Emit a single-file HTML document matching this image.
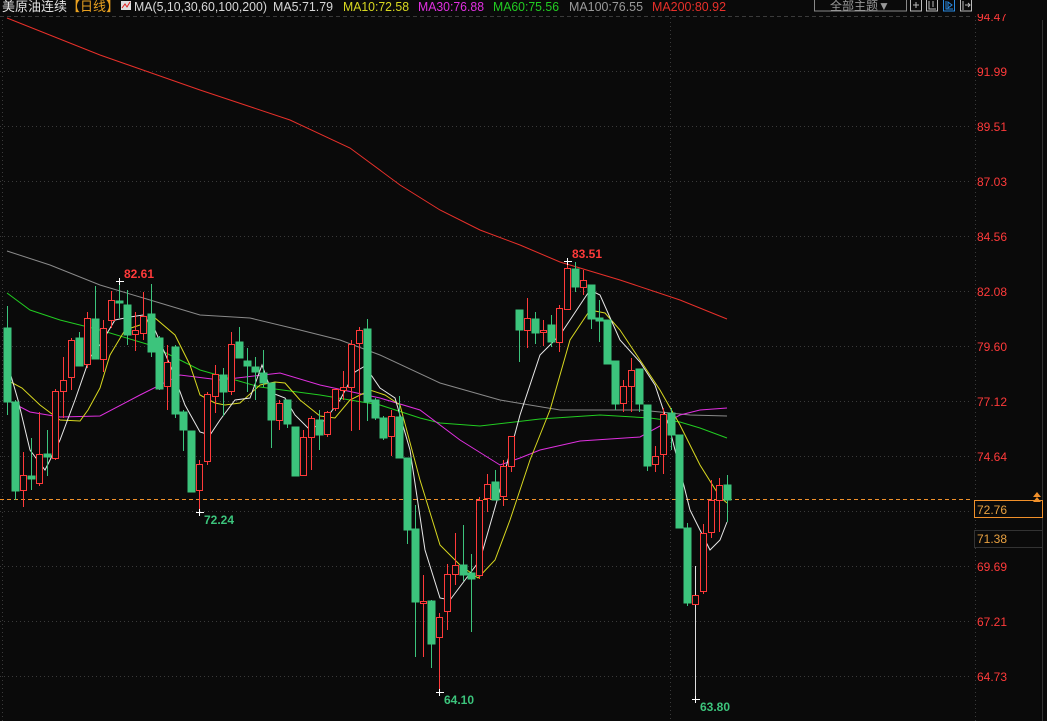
<!DOCTYPE html>
<html><head><meta charset="utf-8"><style>
html,body{margin:0;padding:0;background:#0a0a0a;width:1047px;height:721px;overflow:hidden}
svg{display:block}
text{font-family:"Liberation Sans","Noto Sans CJK SC",sans-serif}
</style></head><body>
<svg width="1047" height="721" viewBox="0 0 1047 721" xmlns="http://www.w3.org/2000/svg">
<rect width="1047" height="721" fill="#0a0a0a"/>
<g stroke="#3a3a3a" stroke-dasharray="1,3" stroke-width="1">
<line x1="0" y1="16.5" x2="972" y2="16.5" stroke-dasharray="4,3"/>
<line x1="0" y1="71.5" x2="972" y2="71.5"/><line x1="0" y1="126.5" x2="972" y2="126.5"/>
<line x1="0" y1="181.5" x2="972" y2="181.5"/><line x1="0" y1="236.5" x2="972" y2="236.5"/>
<line x1="0" y1="291.5" x2="972" y2="291.5"/><line x1="0" y1="346.5" x2="972" y2="346.5"/>
<line x1="0" y1="401.5" x2="972" y2="401.5"/><line x1="0" y1="456.5" x2="972" y2="456.5"/>
<line x1="0" y1="511.5" x2="972" y2="511.5"/><line x1="0" y1="566.5" x2="972" y2="566.5"/>
<line x1="0" y1="621.5" x2="972" y2="621.5"/><line x1="0" y1="676.5" x2="972" y2="676.5"/>
<line x1="2.5" y1="16" x2="2.5" y2="721"/><line x1="975.5" y1="16" x2="975.5" y2="721"/>
<line x1="670.5" y1="18" x2="670.5" y2="721"/>
</g>
<line x1="1042.5" y1="20" x2="1042.5" y2="721" stroke="#333"/>
<line x1="0" y1="499.5" x2="972" y2="499.5" stroke="#f0902a" stroke-dasharray="4,3"/>
<g fill="none" stroke-width="1">
<polyline stroke="#e8302a" points="7,18 100,55 200,90 290,120 350,148 400,185 440,210 480,230 520,245 560,262 620,280 680,300 727,319"/>
<polyline stroke="#8a8a8a" points="7,251 50,265 100,285 150,300 200,315 250,318 300,330 340,340 380,355 440,383 500,400 560,410 640,410 690,415 727,416"/>
<polyline stroke="#22cc22" points="7,293 30,310 60,320 100,330 150,345 200,370 260,387 320,395 380,405 420,418 440,423 480,426 540,419 600,415 650,418 680,422 700,428 727,438"/>
<polyline stroke="#e030e0" points="7,400 30,412 60,417 100,416 140,395 180,375 220,380 280,373 320,385 380,398 420,410 460,440 500,465 520,458 540,450 580,441 640,437 680,415 700,410 727,408"/>
<polyline stroke="#d8d820" points="7,380 22,388 40,405 60,420 80,421 88,410 100,388 110,355 125,330 140,325 155,318 175,335 190,365 200,395 215,403 225,405 240,403 260,385 275,382 285,383 300,400 320,416 335,418 350,400 370,390 385,395 400,405 420,480 440,545 460,565 478,578 495,560 510,520 530,460 550,410 570,340 590,310 605,313 620,330 640,360 660,390 680,425 700,465 720,497 727,503"/>
<polyline stroke="#e8e8e8" points="7,362 18,400 30,450 45,470 60,440 75,400 90,357 100,345 115,320 130,317 143,315 155,330 170,365 185,405 200,432 210,435 220,420 235,400 250,398 262,365 272,393 285,398 295,415 310,430 325,420 340,400 355,372 365,366 380,388 395,398 410,450 425,550 440,598 450,600 465,580 480,560 500,490 520,415 540,355 560,335 580,305 590,290 600,295 620,340 640,362 655,385 670,430 690,510 710,550 720,540 727,522"/>
</g>
<g stroke="#3cc47c" fill="#3cc47c">
<line x1="7.5" y1="306" x2="7.5" y2="415"/><rect x="4" y="328" width="7" height="74"/>
<line x1="15.5" y1="400" x2="15.5" y2="500"/><rect x="12" y="402" width="7" height="89"/>
<line x1="31.5" y1="438" x2="31.5" y2="490"/><rect x="28" y="476" width="7" height="3"/>
<line x1="47.5" y1="430" x2="47.5" y2="476"/><rect x="44" y="454" width="7" height="3"/>
<line x1="79.5" y1="332" x2="79.5" y2="366"/><rect x="76" y="338" width="7" height="28"/>
<line x1="95.5" y1="286" x2="95.5" y2="359"/><rect x="92" y="319" width="7" height="40"/>
<line x1="119.5" y1="281" x2="119.5" y2="318"/><rect x="116" y="301" width="7" height="2"/>
<line x1="127.5" y1="290" x2="127.5" y2="345"/><rect x="124" y="305" width="7" height="30"/>
<line x1="151.5" y1="284" x2="151.5" y2="357"/><rect x="148" y="314" width="7" height="38"/>
<line x1="159.5" y1="336" x2="159.5" y2="390"/><rect x="156" y="338" width="7" height="51"/>
<line x1="175.5" y1="345" x2="175.5" y2="418"/><rect x="172" y="347" width="7" height="67"/>
<line x1="183.5" y1="410" x2="183.5" y2="451"/><rect x="180" y="412" width="7" height="18"/>
<line x1="191.5" y1="431" x2="191.5" y2="492"/><rect x="188" y="431" width="7" height="61"/>
<line x1="223.5" y1="368" x2="223.5" y2="416"/><rect x="220" y="375" width="7" height="17"/>
<line x1="239.5" y1="327" x2="239.5" y2="358"/><rect x="236" y="342" width="7" height="16"/>
<line x1="247.5" y1="348" x2="247.5" y2="392"/><rect x="244" y="361" width="7" height="5"/>
<line x1="255.5" y1="357" x2="255.5" y2="400"/><rect x="252" y="367" width="7" height="5"/>
<line x1="263.5" y1="350" x2="263.5" y2="387"/><rect x="260" y="373" width="7" height="10"/>
<line x1="271.5" y1="383" x2="271.5" y2="448"/><rect x="268" y="383" width="7" height="37"/>
<line x1="287.5" y1="400" x2="287.5" y2="428"/><rect x="284" y="400" width="7" height="24"/>
<line x1="295.5" y1="427" x2="295.5" y2="476"/><rect x="292" y="427" width="7" height="49"/>
<line x1="319.5" y1="410" x2="319.5" y2="450"/><rect x="316" y="420" width="7" height="15"/>
<line x1="367.5" y1="319" x2="367.5" y2="421"/><rect x="364" y="329" width="7" height="73"/>
<line x1="375.5" y1="398" x2="375.5" y2="420"/><rect x="372" y="400" width="7" height="18"/>
<line x1="383.5" y1="416" x2="383.5" y2="440"/><rect x="380" y="418" width="7" height="20"/>
<line x1="399.5" y1="396" x2="399.5" y2="458"/><rect x="396" y="417" width="7" height="41"/>
<line x1="407.5" y1="458" x2="407.5" y2="544"/><rect x="404" y="458" width="7" height="72"/>
<line x1="415.5" y1="505" x2="415.5" y2="657"/><rect x="412" y="529" width="7" height="73"/>
<line x1="431.5" y1="600" x2="431.5" y2="668"/><rect x="428" y="601" width="7" height="43"/>
<line x1="463.5" y1="525" x2="463.5" y2="581"/><rect x="460" y="565" width="7" height="10"/>
<line x1="471.5" y1="554" x2="471.5" y2="632"/><rect x="468" y="573" width="7" height="6"/>
<line x1="495.5" y1="470" x2="495.5" y2="500"/><rect x="492" y="482" width="7" height="18"/>
<line x1="519.5" y1="310" x2="519.5" y2="362"/><rect x="516" y="310" width="7" height="20"/>
<line x1="535.5" y1="312" x2="535.5" y2="344"/><rect x="532" y="319" width="7" height="14"/>
<line x1="551.5" y1="315" x2="551.5" y2="347"/><rect x="548" y="325" width="7" height="17"/>
<line x1="575.5" y1="262" x2="575.5" y2="292"/><rect x="572" y="269" width="7" height="18"/>
<line x1="591.5" y1="285" x2="591.5" y2="329"/><rect x="588" y="285" width="7" height="34"/>
<line x1="599.5" y1="300" x2="599.5" y2="342"/><rect x="596" y="318" width="7" height="3"/>
<line x1="607.5" y1="320" x2="607.5" y2="364"/><rect x="604" y="320" width="7" height="44"/>
<line x1="615.5" y1="361" x2="615.5" y2="410"/><rect x="612" y="361" width="7" height="43"/>
<line x1="639.5" y1="369" x2="639.5" y2="412"/><rect x="636" y="369" width="7" height="35"/>
<line x1="647.5" y1="405" x2="647.5" y2="471"/><rect x="644" y="405" width="7" height="61"/>
<line x1="671.5" y1="408" x2="671.5" y2="450"/><rect x="668" y="413" width="7" height="22"/>
<line x1="679.5" y1="435" x2="679.5" y2="528"/><rect x="676" y="435" width="7" height="93"/>
<line x1="687.5" y1="523" x2="687.5" y2="606"/><rect x="684" y="528" width="7" height="75"/>
<line x1="727.5" y1="475" x2="727.5" y2="522"/><rect x="724" y="485" width="7" height="15"/>
</g>
<g stroke="#ff3a3a" fill="#0a0a0a">
<line x1="23.5" y1="452" x2="23.5" y2="507"/><rect x="20.5" y="475.5" width="6" height="15"/>
<line x1="39.5" y1="412" x2="39.5" y2="486"/><rect x="36.5" y="454.5" width="6" height="29"/>
<line x1="55.5" y1="389" x2="55.5" y2="460"/><rect x="52.5" y="391.5" width="6" height="67"/>
<line x1="63.5" y1="357" x2="63.5" y2="418"/><rect x="60.5" y="380.5" width="6" height="11"/>
<line x1="71.5" y1="338" x2="71.5" y2="390"/><rect x="68.5" y="340.5" width="6" height="37"/>
<line x1="87.5" y1="312" x2="87.5" y2="368"/><rect x="84.5" y="318.5" width="6" height="46"/>
<line x1="103.5" y1="320" x2="103.5" y2="372"/><rect x="100.5" y="328.5" width="6" height="31"/>
<line x1="111.5" y1="291" x2="111.5" y2="328"/><rect x="108.5" y="300.5" width="6" height="20"/>
<line x1="135.5" y1="312" x2="135.5" y2="351"/><rect x="132.5" y="330.5" width="6" height="4"/>
<line x1="143.5" y1="292" x2="143.5" y2="340"/><rect x="140.5" y="316.5" width="6" height="17"/>
<line x1="167.5" y1="345" x2="167.5" y2="410"/><rect x="164.5" y="362.5" width="6" height="24"/>
<line x1="199.5" y1="460" x2="199.5" y2="512"/><rect x="196.5" y="464.5" width="6" height="26"/>
<line x1="207.5" y1="392" x2="207.5" y2="465"/><rect x="204.5" y="394.5" width="6" height="67"/>
<line x1="215.5" y1="365" x2="215.5" y2="413"/><rect x="212.5" y="374.5" width="6" height="22"/>
<line x1="231.5" y1="332" x2="231.5" y2="395"/><rect x="228.5" y="344.5" width="6" height="47"/>
<line x1="279.5" y1="400" x2="279.5" y2="430"/><rect x="276.5" y="403.5" width="6" height="17"/>
<line x1="303.5" y1="430" x2="303.5" y2="476"/><rect x="300.5" y="437.5" width="6" height="38"/>
<line x1="311.5" y1="416" x2="311.5" y2="470"/><rect x="308.5" y="418.5" width="6" height="19"/>
<line x1="327.5" y1="411" x2="327.5" y2="437"/><rect x="324.5" y="412.5" width="6" height="22"/>
<line x1="335.5" y1="389" x2="335.5" y2="411"/><rect x="332.5" y="389.5" width="6" height="19"/>
<line x1="343.5" y1="371" x2="343.5" y2="400"/><rect x="340.5" y="387.5" width="6" height="3"/>
<line x1="351.5" y1="340" x2="351.5" y2="431"/><rect x="348.5" y="344.5" width="6" height="43"/>
<line x1="359.5" y1="327" x2="359.5" y2="430"/><rect x="356.5" y="330.5" width="6" height="13"/>
<line x1="391.5" y1="410" x2="391.5" y2="456"/><rect x="388.5" y="416.5" width="6" height="20"/>
<line x1="423.5" y1="575" x2="423.5" y2="657"/><rect x="420.5" y="601.5" width="6" height="2"/>
<line x1="439.5" y1="613" x2="439.5" y2="692"/><rect x="436.5" y="617.5" width="6" height="20"/>
<line x1="447.5" y1="564" x2="447.5" y2="630"/><rect x="444.5" y="574.5" width="6" height="37"/>
<line x1="455.5" y1="533" x2="455.5" y2="585"/><rect x="452.5" y="565.5" width="6" height="9"/>
<line x1="479.5" y1="497" x2="479.5" y2="579"/><rect x="476.5" y="500.5" width="6" height="75"/>
<line x1="487.5" y1="474" x2="487.5" y2="512"/><rect x="484.5" y="484.5" width="6" height="14"/>
<line x1="503.5" y1="460" x2="503.5" y2="506"/><rect x="500.5" y="466.5" width="6" height="30"/>
<line x1="511.5" y1="436" x2="511.5" y2="472"/><rect x="508.5" y="436.5" width="6" height="30"/>
<line x1="527.5" y1="298" x2="527.5" y2="348"/><rect x="524.5" y="318.5" width="6" height="12"/>
<line x1="543.5" y1="320" x2="543.5" y2="346"/><rect x="540.5" y="330.5" width="6" height="2"/>
<line x1="559.5" y1="305" x2="559.5" y2="352"/><rect x="556.5" y="308.5" width="6" height="34"/>
<line x1="567.5" y1="262" x2="567.5" y2="309"/><rect x="564.5" y="268.5" width="6" height="41"/>
<line x1="583.5" y1="270" x2="583.5" y2="295"/><rect x="580.5" y="280.5" width="6" height="7"/>
<line x1="623.5" y1="380" x2="623.5" y2="412"/><rect x="620.5" y="386.5" width="6" height="17"/>
<line x1="631.5" y1="358" x2="631.5" y2="412"/><rect x="628.5" y="370.5" width="6" height="16"/>
<line x1="655.5" y1="446" x2="655.5" y2="472"/><rect x="652.5" y="456.5" width="6" height="8"/>
<line x1="663.5" y1="408" x2="663.5" y2="474"/><rect x="660.5" y="414.5" width="6" height="40"/>
<line x1="703.5" y1="524" x2="703.5" y2="594"/><rect x="700.5" y="533.5" width="6" height="58"/>
<line x1="711.5" y1="480" x2="711.5" y2="538"/><rect x="708.5" y="500.5" width="6" height="32"/>
<line x1="719.5" y1="478" x2="719.5" y2="532"/><rect x="716.5" y="485.5" width="6" height="15"/>
</g>
<line x1="695.5" y1="566" x2="695.5" y2="700" stroke="#ddd"/>
<rect x="692.5" y="595.5" width="6" height="9" stroke="#ff3a3a" fill="#0a0a0a"/>
<g stroke="#fff">
<line x1="116" y1="281.5" x2="124" y2="281.5"/><line x1="119.5" y1="278" x2="119.5" y2="285"/>
<line x1="196" y1="512.5" x2="204" y2="512.5"/><line x1="199.5" y1="509" x2="199.5" y2="516"/>
<line x1="564" y1="261.5" x2="572" y2="261.5"/><line x1="567.5" y1="258" x2="567.5" y2="265"/>
<line x1="436" y1="692.5" x2="444" y2="692.5"/><line x1="439.5" y1="689" x2="439.5" y2="696"/>
<line x1="692" y1="699.5" x2="700" y2="699.5"/><line x1="695.5" y1="696" x2="695.5" y2="703"/>
</g>
<g font-size="12" font-weight="bold">
<text x="124" y="278" fill="#ff3a3a">82.61</text>
<text x="204" y="524" fill="#3cc47c">72.24</text>
<text x="572" y="258" fill="#ff3a3a">83.51</text>
<text x="444" y="704" fill="#3cc47c">64.10</text>
<text x="700" y="711" fill="#3cc47c">63.80</text>
</g>
<g font-size="12" fill="#ff3a3a">
<text x="977" y="21">94.47</text><text x="977" y="76">91.99</text><text x="977" y="131">89.51</text>
<text x="977" y="186">87.03</text><text x="977" y="241">84.56</text><text x="977" y="296">82.08</text>
<text x="977" y="351">79.60</text><text x="977" y="406">77.12</text><text x="977" y="461">74.64</text>
<text x="977" y="571">69.69</text><text x="977" y="626">67.21</text><text x="977" y="681">64.73</text>
</g>
<rect x="974.5" y="500.5" width="68" height="17" fill="#0a0a0a" stroke="#f0902a"/>
<text x="977" y="514" font-size="12" fill="#e8a040">72.76</text>
<rect x="974.5" y="530.5" width="68" height="17" fill="#0a0a0a" stroke="#333"/>
<text x="977" y="543" font-size="12" fill="#e8a040">71.38</text>
<path d="M1033,497 L1037,492 L1041,497 Z M1033,502 L1037,497 L1041,502 Z" fill="#f0902a"/>
<rect x="0" y="0" width="1047" height="14" fill="#0a0a0a"/>
<text x="2" y="11" font-size="13" fill="#e0e0e0">美原油连续<tspan fill="#e8a020">【日线】</tspan></text>
<rect x="121" y="1" width="10" height="9" fill="#ddd"/><polyline points="122,8 125,4 127,7 130,2" stroke="#e02020" fill="none"/>
<g font-size="13">
<text x="134" y="11" fill="#d8d8d8" textLength="133" lengthAdjust="spacingAndGlyphs">MA(5,10,30,60,100,200)</text>
<text x="273" y="11" fill="#d8d8d8" textLength="60" lengthAdjust="spacingAndGlyphs">MA5:71.79</text>
<text x="343" y="11" fill="#d8d820" textLength="66" lengthAdjust="spacingAndGlyphs">MA10:72.58</text>
<text x="418" y="11" fill="#e030e0" textLength="66" lengthAdjust="spacingAndGlyphs">MA30:76.88</text>
<text x="493" y="11" fill="#22cc22" textLength="66" lengthAdjust="spacingAndGlyphs">MA60:75.56</text>
<text x="569" y="11" fill="#9a9a9a" textLength="74" lengthAdjust="spacingAndGlyphs">MA100:76.55</text>
<text x="652" y="11" fill="#e8302a" textLength="74" lengthAdjust="spacingAndGlyphs">MA200:80.92</text>
</g>
<rect x="814.5" y="-1" width="92" height="12" fill="none" stroke="#888"/>
<text x="830" y="10" font-size="12" fill="#999">全部主题▼</text>
<g fill="none" stroke="#bbb">
<rect x="910.5" y="-1" width="11" height="12"/><path d="M916,2 v6 M913,5 h6"/>
<rect x="926.5" y="-1" width="11" height="12"/><path d="M929,1 v8 h7 M933,1 v6"/>
<rect x="943.5" y="-1" width="11" height="12" stroke="#2a8ae0"/><path d="M946,1 v8 h7 M948,2 l4,3 l-4,3 z" stroke="#2a8ae0"/>
<rect x="960.5" y="-1" width="11" height="12"/><path d="M963,1 v9 M965,5 h5 M968,3 l2,2 l-2,2"/>
</g>
</svg>
</body></html>
